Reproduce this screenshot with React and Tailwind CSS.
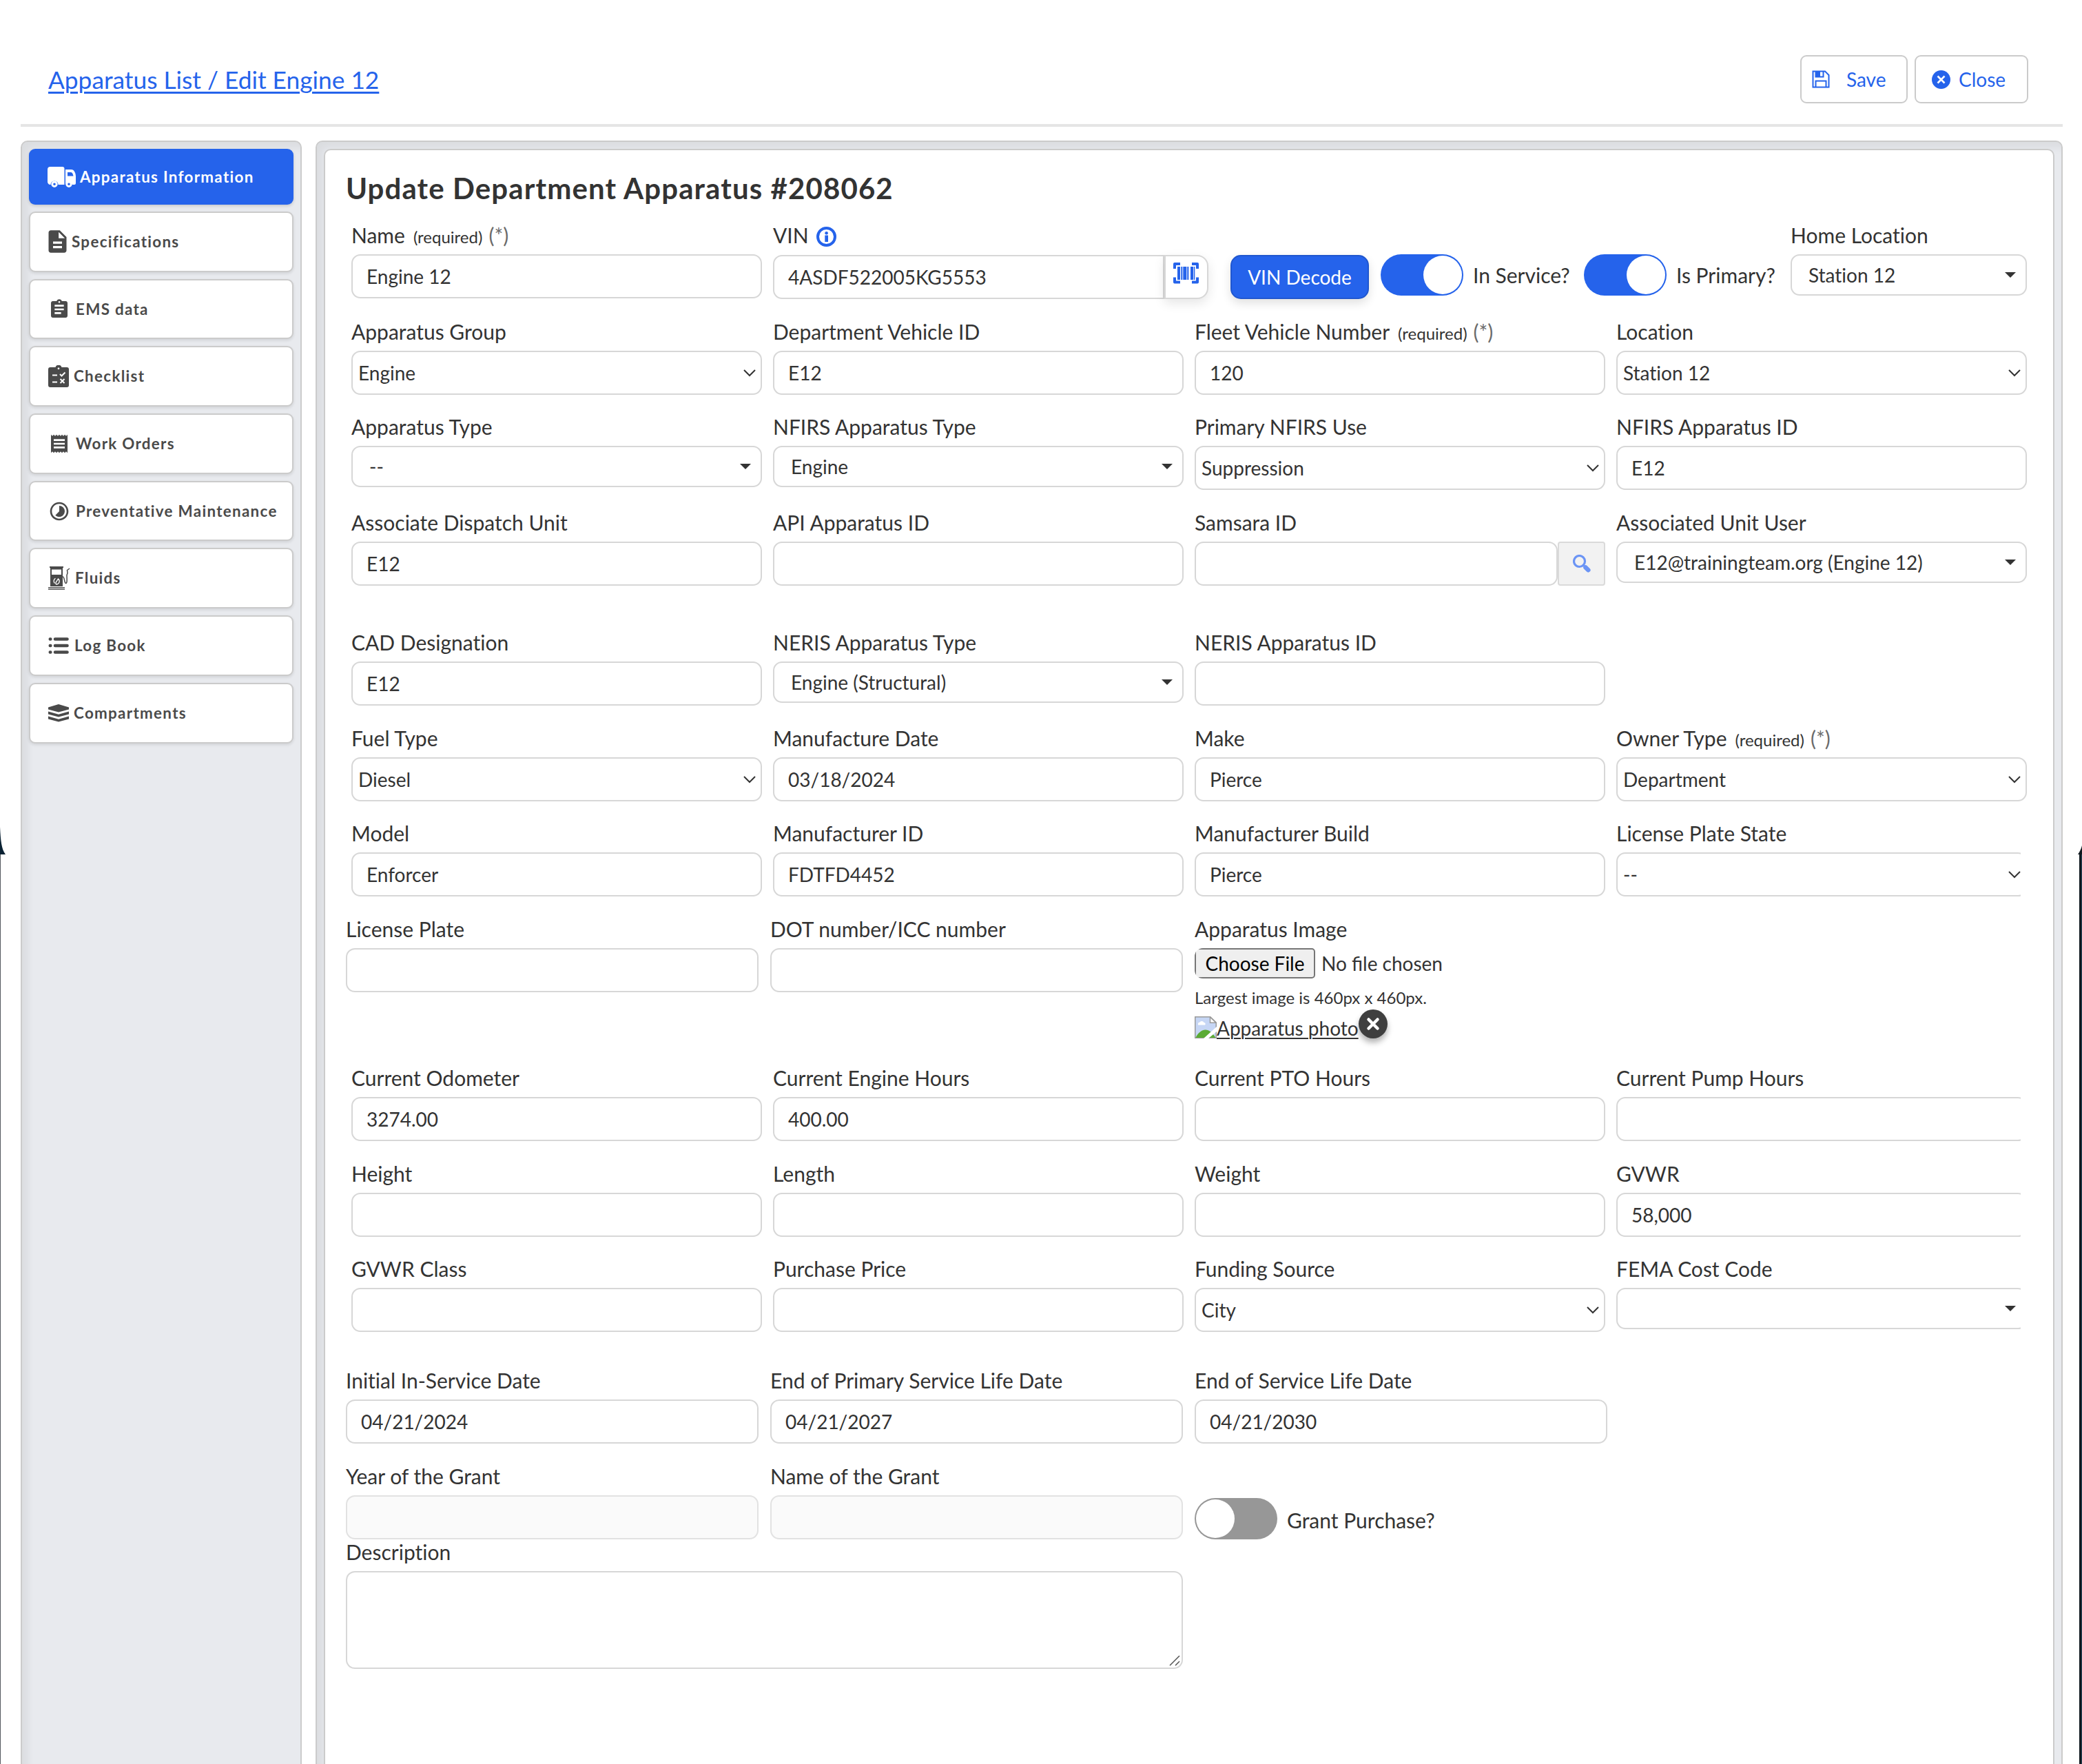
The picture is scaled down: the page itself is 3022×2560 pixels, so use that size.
import React from 'react';
import { MdAssignment, MdDescription, MdReceipt, MdTimelapse } from 'react-icons/md';

const TruckIcon = () => (
  <svg width="42" height="30" viewBox="0 0 42 30" fill="currentColor">
    <path d="M4 0h17.500a3 3 0 0 1 3 3v23H15.500a5.500 5.500 0 0 0-11 0A4 4 0 0 1 0 22V4a4 4 0 0 1 4-4z" />
    <path fillRule="evenodd" d="M26 4h8.500c4 0 6.500 5 6.500 10v10a2 2 0 0 1-2 2h-3a5.500 5.500 0 0 0-10 0zM29 8v5.500h8.500C37 10.500 36 8 34 8z" />
    <path fillRule="evenodd" d="M10 20.500a4.700 4.700 0 1 1 0 9.400 4.700 4.700 0 0 1 0-9.400zm0 2.900a1.800 1.800 0 1 0 0 3.600 1.800 1.800 0 0 0 0-3.600z" />
    <path fillRule="evenodd" d="M31 20.500a4.700 4.700 0 1 1 0 9.400 4.700 4.700 0 0 1 0-9.400zm0 2.900a1.800 1.800 0 1 0 0 3.600 1.800 1.800 0 0 0 0-3.600z" />
  </svg>
);

const ChecklistIcon = () => (
  <svg width="30" height="32" viewBox="0 0 30 32" fill="none">
    <path fillRule="evenodd" fill="currentColor" d="M3 3h7.500a4.700 4.700 0 0 1 9 0H27a3 3 0 0 1 3 3v23a3 3 0 0 1-3 3H3a3 3 0 0 1-3-3V6a3 3 0 0 1 3-3zm12 .4a1.400 1.400 0 1 0 0 2.800 1.400 1.400 0 0 0 0-2.800z" />
    <path stroke="#fff" strokeWidth="2" d="M6 14.500h7M6 24.500h7M17 13l2.500 2.500L24.500 10.500M17.500 20l6 6M23.500 20l-6 6" />
  </svg>
);

const FluidsIcon = () => (
  <svg width="32" height="34" viewBox="0 0 32 34" fill="none">
    <path fillRule="evenodd" fill="currentColor" d="M2 0h20v2h-1v27H3V2H2zM5 4.500v7.500h14V4.500z" />
    <path stroke="currentColor" strokeWidth="1.300" d="M0 30.700h24M0 33h24" />
    <path stroke="currentColor" strokeWidth="1.500" d="M21 15c3 0 2 9 4.500 9.500C28 24.500 27 17 27 13c0-2 1-1.500 1-4l-.5-3.500L31 3" />
    <path stroke="#fff" strokeWidth="1.300" d="M9.500 24.500a4.500 4.500 0 0 1 1-7.200M14.500 18a4.500 4.500 0 0 1-2.500 8c-2-.5-1-3 .5-5z" />
  </svg>
);

const LogIcon = () => (
  <svg width="30" height="24" viewBox="0 0 30 24" stroke="currentColor" strokeWidth="4.600" strokeLinecap="round">
    <path d="M2.800 2.500h.5M10 2.500h17.500M2.800 12h.5M10 12h17.500M2.800 21.500h.5M10 21.500h17.500" />
  </svg>
);

const LayersIcon = () => (
  <svg width="30" height="26" viewBox="0 0 30 26" fill="currentColor">
    <path d="M0 4.500 15 0l15 4.500v3L15 11.500 0 7.500zM0 10.500l15 4.300 15-4.300v4L15 18.500 0 14.500zM0 17.500l15 4.300 15-4.300v4L15 25.500 0 21.500z" />
  </svg>
);

const SaveIcon = () => (
  <svg width="26" height="26" viewBox="0 0 26 26" fill="none" stroke="currentColor" strokeWidth="2">
    <path d="M1.500 1.500h17.500l5.500 5.500v17.500h-23z" />
    <path d="M5.500 1.500v8h11v-8M5.500 24.500v-9h15v9" />
    <path fill="currentColor" d="M6 2h5v7H6z" />
  </svg>
);

const CloseIcon = () => (
  <svg width="27" height="27" viewBox="0 0 27 27">
    <circle cx="13.500" cy="13.500" r="13.500" fill="currentColor" />
    <path stroke="#fff" strokeWidth="2.600" d="m8.500 8.500 10 10M18.500 8.500l-10 10" />
  </svg>
);

const InfoIcon = () => (
  <svg className="text-[#2563eb]" width="29" height="29" viewBox="0 0 29 29" fill="none">
    <circle cx="14.500" cy="14.500" r="12.500" stroke="currentColor" strokeWidth="4" />
    <path fill="currentColor" d="M12.300 12.500h4.700v9.500h-4.700z" />
    <circle cx="14.600" cy="9.300" r="2.300" fill="currentColor" />
  </svg>
);

const BarcodeIcon = () => (
  <svg width="37" height="31" viewBox="0 0 37 31" fill="none" stroke="currentColor">
    <path strokeWidth="4" strokeLinejoin="round" d="M2 9V2h8M27 2h8v7M2 21.500V28.500h8M27 28.500h8v-7" />
    <path fill="currentColor" stroke="none" d="M6 6h4v19H6zM11.300 6h2v19h-2zM14.300 6h5v19h-5zM20.300 6h2v19h-2zM25 6h4v19h-4zM29.800 6h1.500v19h-1.500z" />
  </svg>
);

const SearchIcon = () => (
  <svg width="26" height="26" viewBox="0 0 26 26" fill="none" stroke="#6b94f5">
    <circle cx="9.500" cy="9.500" r="8" strokeWidth="3.200" />
    <path strokeWidth="3" d="m15 15 3 3" />
    <path strokeWidth="6.500" strokeLinecap="round" d="m18.500 18.500 3.800 3.800" />
  </svg>
);

const BrokenImageIcon = () => (
  <svg width="32" height="32" viewBox="0 0 32 32">
    <path fill="#c6d6f5" stroke="#9a9a9a" strokeWidth="1.500" d="M.75.75h22L31.250 9v22.250H.75z" />
    <path fill="#fff" d="M5 12a3 3 0 0 1 2.500-3.500 3.500 3.500 0 0 1 6 .5 2 2 0 0 1 1.500 3.500H5z" />
    <path fill="#5bab35" d="M1.500 31c3-7 9-11.500 14-11.500 6 0 10 4 15 11.500z" />
    <path fill="#fff" d="M32 15v7L20 32h-7z" />
    <path fill="#fff" stroke="#9a9a9a" strokeWidth="1.500" d="M22.500 1v8.200h8.500z" />
  </svg>
);

const navItems = [
  { label: 'Specifications', icon: <MdDescription size={39} className="-ml-[6px] -mr-[6px]" />, gap: 'gap-[7px]' },
  { label: 'EMS data', icon: <MdAssignment size={32} />, gap: 'gap-[8px]' },
  { label: 'Checklist', icon: <ChecklistIcon />, gap: 'gap-[7px]' },
  { label: 'Work Orders', icon: <MdReceipt size={32} />, gap: 'gap-[8px]' },
  { label: 'Preventative Maintenance', icon: <MdTimelapse size={32} />, gap: 'gap-[8px]' },
  { label: 'Fluids', icon: <FluidsIcon />, gap: 'gap-[7px]' },
  { label: 'Log Book', icon: <LogIcon />, gap: 'gap-[8px]' },
  { label: 'Compartments', icon: <LayersIcon />, gap: 'gap-[7px]' }
];

const Label = ({ children, required }) => (
  <div className="h-[46px] text-[30px] leading-[37px] whitespace-nowrap">
    {children}
    {required && (
      <>
        <span className="ml-[12px] text-[24px]">(required)</span>
        <span className="ml-[9px] text-[#6b6b6b]">(*)</span>
      </>
    )}
  </div>
);

const Input = ({ value, disabled }) => (
  <div
    className={`h-16 rounded-[13px] border-2 pl-[20px] text-[28px] leading-[60px] whitespace-nowrap ${
      disabled ? 'border-[#e2e2e2] bg-[#fafafa]' : 'border-[#d7d7d7] bg-white'
    }`}
  >
    {value}
  </div>
);

// Browser style select with a thin chevron
const NativeSelect = ({ value }) => (
  <div className="flex h-16 items-center justify-between rounded-[13px] border-2 border-[#d7d7d7] bg-white pl-[8px] pr-[7px] text-[28px] leading-[60px]">
    <span>{value}</span>
    <svg width="18" height="12" viewBox="0 0 18 12" fill="none" stroke="#333" strokeWidth="2">
      <path d="m1 2 8 8 8-8" />
    </svg>
  </div>
);

// Searchable dropdown with a solid caret
const ComboSelect = ({ value }) => (
  <div className="flex h-[60px] items-center justify-between rounded-[13px] border-2 border-[#d7d7d7] bg-white pl-[24px] pr-[14px] text-[28px] leading-[56px]">
    <span>{value}</span>
    <svg width="16" height="8" viewBox="0 0 16 8" fill="#333">
      <path d="M0 0h16L8 8z" />
    </svg>
  </div>
);

const Field = ({ label, value, type = 'text', required, clipped }) => {
  const Control = type === 'native' ? NativeSelect : type === 'combo' ? ComboSelect : Input;
  return (
    <div className={clipped ? 'w-[587px] overflow-hidden' : ''}>
      <Label required={required}>{label}</Label>
      <div className={clipped ? 'w-[596px]' : ''}>
        <Control value={value} disabled={type === 'disabled'} />
      </div>
    </div>
  );
};

const Row = ({ height, children }) => (
  <div className={`grid grid-cols-4 gap-4 pl-[8px] ${height}`}>{children}</div>
);

const WideRow = ({ height, children }) => (
  <div className={`grid grid-cols-[599px_599px_599px] gap-[17px] ${height}`}>{children}</div>
);

const Toggle = ({ on }) => (
  <div
    className={`flex h-[60px] w-[120px] shrink-0 items-center rounded-full px-[2px] ${
      on ? 'justify-end bg-[#2563eb]' : 'justify-start bg-[#979797]'
    }`}
  >
    <div className="size-[56px] rounded-full bg-white"></div>
  </div>
);

const App = () => {
  return (
    <div className="relative h-[2560px] w-[3022px] overflow-hidden bg-white font-['Lato',sans-serif] text-[#333] [font-variant-ligatures:none]">
      <header className="mx-[30px] flex h-[184px] w-[2964px] items-start justify-between border-b-4 border-[#e5e5e5] pt-[80px] pl-[40px] pr-[50px]">
        <a className="text-[35.300px] leading-[71px] text-[#2563eb] underline decoration-[3px] underline-offset-[4px]">
          Apparatus List / Edit Engine 12
        </a>
        <div className="flex gap-[10px] text-[28px] text-[#2563eb]">
          <button className="flex h-[70px] w-[156px] items-center gap-[24px] rounded-[9px] border-2 border-[#cbcbcb] pl-[15px]">
            <SaveIcon />
            <span>Save</span>
          </button>
          <button className="flex h-[70px] w-[165px] items-center gap-[12px] rounded-[9px] border-2 border-[#cbcbcb] pl-[23px]">
            <CloseIcon />
            <span>Close</span>
          </button>
        </div>
      </header>

      <div className="flex gap-[20px] pt-[20px] pr-[28px] pl-[30px]">
        <aside className="h-[2400px] w-[408px] shrink-0 rounded-[10px] border-2 border-[#cbcbcb] bg-[#e8eaee] p-[10px] shadow-[inset_8px_8px_12px_rgba(0,0,0,0.06)]">
          <nav className="flex flex-col gap-[10px] text-[22.400px] font-bold tracking-[1.300px] text-[#4a4a4a]">
            <a className="flex h-[81px] items-center gap-[5px] rounded-[9px] bg-[#2563eb] pl-[27px] text-white shadow-[0_2px_4px_rgba(0,0,0,0.15)]">
              <TruckIcon />
              <span>Apparatus Information</span>
            </a>
            {navItems.map((item) => (
              <a
                key={item.label}
                className={`flex h-[87.700px] items-center rounded-[9px] border-2 border-[#cbcbcb] bg-white pl-[26px] whitespace-nowrap shadow-[0_2px_4px_rgba(0,0,0,0.1)] ${item.gap}`}
              >
                {item.icon}
                <span>{item.label}</span>
              </a>
            ))}
          </nav>
        </aside>

        <main className="h-[2400px] w-[2536px] shrink-0 rounded-[10px] border-2 border-[#cbcbcb] bg-[#e8eaee] p-[10px] shadow-[inset_8px_8px_12px_rgba(0,0,0,0.06)]">
          <section className="h-full rounded-[10px] border-2 border-[#cbcbcb] bg-white pt-[25px] pl-[30px] pr-[38px]">
            <h1 className="h-[80px] text-[42px] leading-[60px] font-bold tracking-[1.100px]">
              Update Department Apparatus #208062
            </h1>

            <div className="flex h-[140px] pl-[8px]">
              <div className="w-[596px]">
                <Label required>Name</Label>
                <Input value="Engine 12" />
              </div>
              <div className="ml-[16px]">
                <div className="flex gap-[11px]">
                  <Label>VIN</Label>
                  <div className="pt-[6px]">
                    <InfoIcon />
                  </div>
                </div>
                <div className="flex pt-[1px]">
                  <div className="h-16 w-[568px] rounded-l-[13px] border-2 border-[#d7d7d7] pl-[20px] text-[28px] leading-[60px]">
                    4ASDF522005KG5553
                  </div>
                  <button className="flex h-16 w-[64px] items-start rounded-r-[16px] border-2 border-[#d7d7d7] bg-white pt-[9px] pl-[11px] text-[#2563eb] shadow-[0_6px_16px_rgba(0,0,0,0.1)]">
                    <BarcodeIcon />
                  </button>
                </div>
              </div>
              <button className="mt-[47px] ml-[32px] h-16 w-[201px] rounded-[15px] border-2 border-[#2057cf] bg-[#2563eb] text-[28px] text-white shadow-[0_6px_14px_rgba(0,0,0,0.12)]">
                VIN Decode
              </button>
              <div className="mt-[46px] ml-[17px] flex h-[60px] items-center text-[30px]">
                <Toggle on />
                <span className="w-[161px] pl-[14px]">In Service?</span>
                <span className="ml-[14px]">
                  <Toggle on />
                </span>
                <span className="pl-[14px]">Is Primary?</span>
              </div>
              <div className="ml-auto w-[343px]">
                <Label>Home Location</Label>
                <ComboSelect value="Station 12" />
              </div>
            </div>

            <Row height="h-[138px]">
              <Field label="Apparatus Group" value="Engine" type="native" />
              <Field label="Department Vehicle ID" value="E12" />
              <Field label="Fleet Vehicle Number" value="120" required />
              <Field label="Location" value="Station 12" type="native" />
            </Row>
            <Row height="h-[139px]">
              <Field label="Apparatus Type" value="--" type="combo" />
              <Field label="NFIRS Apparatus Type" value="Engine" type="combo" />
              <Field label="Primary NFIRS Use" value="Suppression" type="native" />
              <Field label="NFIRS Apparatus ID" value="E12" />
            </Row>
            <Row height="h-[174px]">
              <Field label="Associate Dispatch Unit" value="E12" />
              <Field label="API Apparatus ID" />
              <div>
                <Label>Samsara ID</Label>
                <div className="flex">
                  <div className="w-[527px]">
                    <Input />
                  </div>
                  <button className="flex h-16 w-[69px] items-center justify-center rounded-[4px] border-2 border-[#dadada] bg-[#f2f2f2]">
                    <SearchIcon />
                  </button>
                </div>
              </div>
              <Field label="Associated Unit User" value="E12@trainingteam.org (Engine 12)" type="combo" />
            </Row>
            <Row height="h-[139px]">
              <Field label="CAD Designation" value="E12" />
              <Field label="NERIS Apparatus Type" value="Engine (Structural)" type="combo" />
              <Field label="NERIS Apparatus ID" />
            </Row>
            <Row height="h-[138px]">
              <Field label="Fuel Type" value="Diesel" type="native" />
              <Field label="Manufacture Date" value="03/18/2024" />
              <Field label="Make" value="Pierce" />
              <Field label="Owner Type" value="Department" type="native" required />
            </Row>
            <Row height="h-[139px]">
              <Field label="Model" value="Enforcer" />
              <Field label="Manufacturer ID" value="FDTFD4452" />
              <Field label="Manufacturer Build" value="Pierce" />
              <Field label="License Plate State" value="--" type="native" clipped />
            </Row>
            <WideRow height="h-[216px]">
              <Field label="License Plate" />
              <Field label="DOT number/ICC number" />
              <div>
                <Label>Apparatus Image</Label>
                <div className="flex items-center gap-[9px] overflow-hidden rounded-l-[12px] text-[28px] leading-[40px]">
                  <button className="h-[44px] w-[175px] rounded-[5px] border-2 border-[#767676] bg-[#efefef] leading-[40px] text-black">
                    Choose File
                  </button>
                  <span className="[font-variant-ligatures:normal]">No file chosen</span>
                </div>
                <p className="mt-[13px] text-[24px] leading-[30px]">Largest image is 460px x 460px.</p>
                <div className="mt-[2px] flex h-[42px] items-end">
                  <BrokenImageIcon />
                  <span className="text-[28px] leading-[30px] underline decoration-2 underline-offset-[3px]">Apparatus photo</span>
                  <button className="flex size-[42px] items-center justify-center rounded-full bg-[#3f3f3f] shadow-[0_6px_8px_rgba(0,0,0,0.3)]">
                    <svg width="20" height="20" viewBox="0 0 20 20" stroke="#fff" strokeWidth="4.500" strokeLinecap="round">
                      <path d="m3.500 3.500 13 13M16.500 3.500l-13 13" />
                    </svg>
                  </button>
                </div>
              </div>
            </WideRow>
            <Row height="h-[139px]">
              <Field label="Current Odometer" value="3274.00" />
              <Field label="Current Engine Hours" value="400.00" />
              <Field label="Current PTO Hours" />
              <Field label="Current Pump Hours" clipped />
            </Row>
            <Row height="h-[138px]">
              <Field label="Height" />
              <Field label="Length" />
              <Field label="Weight" />
              <Field label="GVWR" value="58,000" clipped />
            </Row>
            <Row height="h-[162px]">
              <Field label="GVWR Class" />
              <Field label="Purchase Price" />
              <Field label="Funding Source" value="City" type="native" />
              <Field label="FEMA Cost Code" type="combo" clipped />
            </Row>
            <WideRow height="h-[139px]">
              <Field label="Initial In-Service Date" value="04/21/2024" />
              <Field label="End of Primary Service Life Date" value="04/21/2027" />
              <Field label="End of Service Life Date" value="04/21/2030" />
            </WideRow>
            <WideRow height="h-[110px]">
              <Field label="Year of the Grant" type="disabled" />
              <Field label="Name of the Grant" type="disabled" />
              <div className="flex h-[60px] items-center self-end text-[30px]">
                <Toggle />
                <span className="pt-[5px] pl-[14px]">Grant Purchase?</span>
              </div>
            </WideRow>
            <Label>Description</Label>
            <div className="flex h-[142px] w-[1215px] items-end justify-end rounded-[13px] border-2 border-[#d7d7d7] p-[2px]">
              <svg width="16" height="16" viewBox="0 0 16 16" stroke="#555" strokeWidth="1.500">
                <path d="M1 15 15 1M9 15l6-6" />
              </svg>
            </div>
          </section>
        </main>
      </div>

      {/* Slivers of the page behind the dialog */}
      <svg className="absolute top-[1195px] left-0" width="8" height="1365" viewBox="0 0 8 1365">
        <path fill="#0b2233" d="M0 5c1 20 2 32 8 40H0z" />
        <path fill="#55595f" d="M0 45h1v1320H0z" />
      </svg>
      <svg className="absolute top-[1227px] right-0" width="6" height="1333" viewBox="0 0 6 1333">
        <path fill="#10191f" d="M6 0v13H0C2 10 5 5 6 0zM2 13h4v1320H2z" />
        <path fill="#24455c" d="M5 13h1v1320H5z" />
      </svg>
    </div>
  );
};

export default App;
